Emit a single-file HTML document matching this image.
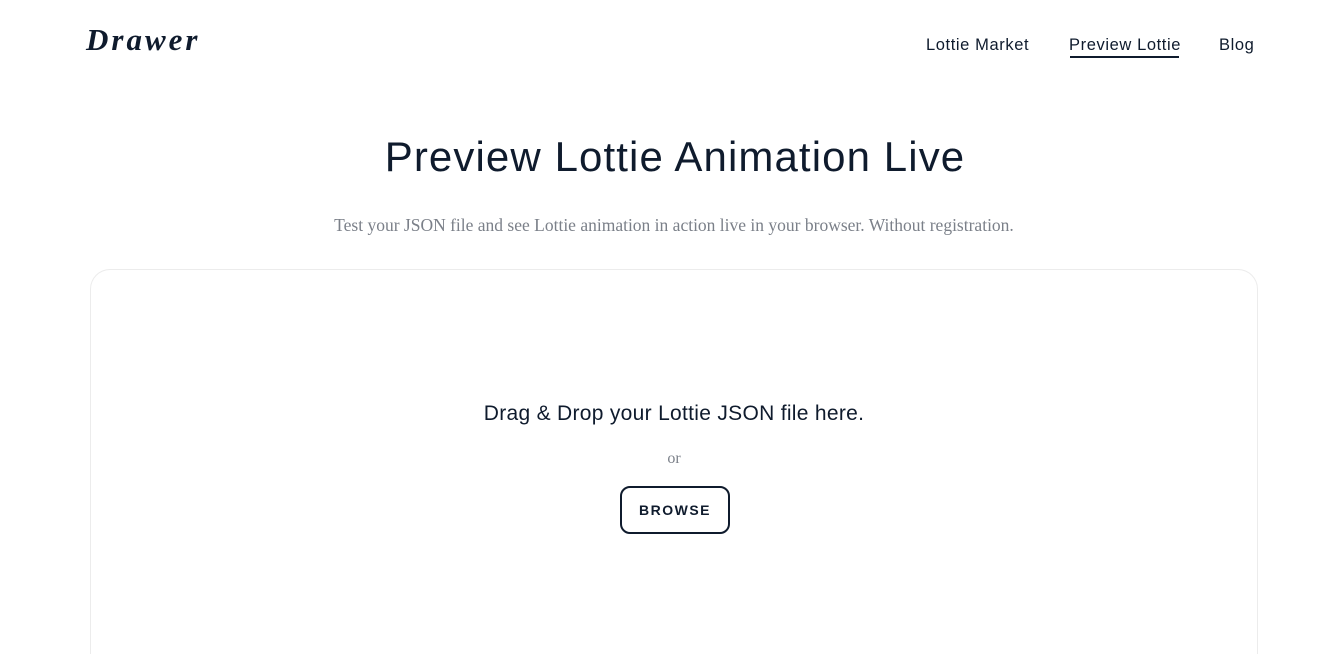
<!DOCTYPE html>
<html><head><style>
html,body{margin:0;width:1344px;height:654px;overflow:hidden}
body{background:#fff;font-family:"Liberation Sans",sans-serif;color:#0f1b2d;position:relative}
.logo{position:absolute;left:86px;top:22px;font-size:31px;font-weight:bold;font-style:italic;letter-spacing:3px;color:#0f1b2d;font-family:"Liberation Serif",serif}
.nav a{position:absolute;top:36px;font-size:16.5px;letter-spacing:0.6px;color:#0f1b2d;text-decoration:none;white-space:nowrap}
h1{position:absolute;left:0;width:1350px;text-align:center;top:133px;margin:0;font-size:42px;font-weight:normal;letter-spacing:1.1px;color:#0f1b2d}
.sub{position:absolute;left:0;width:1348px;text-align:center;top:215px;font-family:"Liberation Serif",serif;font-size:17.5px;color:#7b8089}
.card{position:absolute;left:90px;top:269px;width:1168px;height:400px;border:1px solid #ececec;border-bottom:none;border-radius:20px 20px 0 0;box-sizing:border-box;max-height:385px}
.drag{position:absolute;left:0;width:1348px;text-align:center;top:402px;font-size:21px;letter-spacing:0.3px;color:#0f1b2d}
.or{position:absolute;left:0;width:1348px;text-align:center;top:450px;font-family:"Liberation Serif",serif;font-size:16px;color:#7b8089}
.btn{position:absolute;left:620px;top:486px;width:106px;height:44px;border:2px solid #0f1b2d;border-radius:10px;text-align:center;line-height:45px;font-size:14px;font-weight:bold;letter-spacing:1.5px}
</style></head><body>
<div class="logo">Drawer</div>
<div class="nav"><a style="left:926px">Lottie Market</a><a style="left:1069px">Preview Lottie</a><a style="left:1219px">Blog</a></div>
<div style="position:absolute;left:1070px;top:56px;width:109px;height:2px;background:#0f1b2d"></div>
<h1>Preview Lottie Animation Live</h1>
<div class="sub">Test your JSON file and see Lottie animation in action live in your browser. Without registration.</div>
<div class="card"></div>
<div class="drag">Drag &amp; Drop your Lottie JSON file here.</div>
<div class="or">or</div>
<div class="btn">BROWSE</div>
</body></html>
